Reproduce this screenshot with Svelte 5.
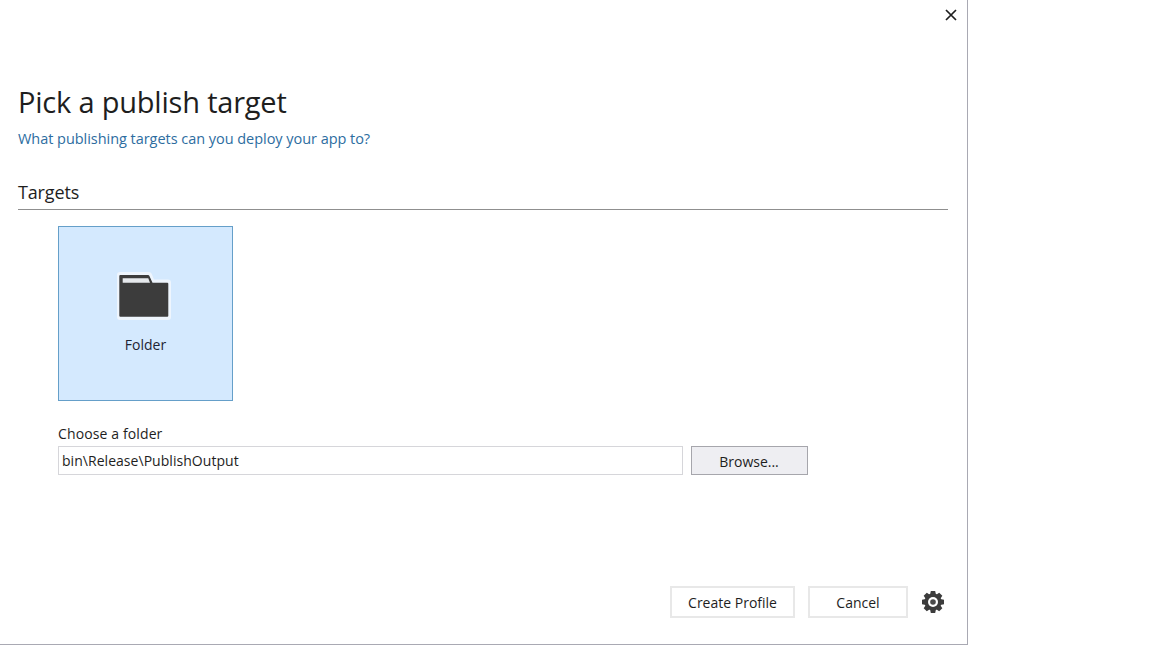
<script>
  let folder = 'bin\\Release\\PublishOutput';
  const teeth = [0, 45, 90, 135, 180, 225, 270, 315];
</script>

<div class="dialog">
  <div class="close-row">
    <button class="close" aria-label="Close">
      <svg viewBox="0 0 12 12" width="12" height="12">
        <path d="M1 1l10 10M11 1L1 11" stroke="#1e1e1e" stroke-width="1.7" fill="none" />
      </svg>
    </button>
  </div>

  <h1>Pick a publish target</h1>
  <p class="subtitle">What publishing targets can you deploy your app to?</p>

  <h2>Targets</h2>

  <div class="content">
    <div class="tile">
      <svg class="folder" viewBox="0 0 54 48" width="54" height="48">
        <path
          d="M3 0h29a3 3 0 0 1 2.700 1.700L37 7.500h14a3 3 0 0 1 3 3V45a3 3 0 0 1-3 3H3a3 3 0 0 1-3-3V3a3 3 0 0 1 3-3z"
          fill="#eef5fd"
        />
        <path
          d="M3.300 3h27.700a1.500 1.500 0 0 1 1.300.8l3.200 6.900h14.800a1 1 0 0 1 1 1v32a1 1 0 0 1-1 1H3.300a1 1 0 0 1-1-1V4a1 1 0 0 1 1-1z"
          fill="#3c3c3c"
        />
        <path d="M5.700 6.300h25.600l1.700 4.400H5.700z" fill="#e6e9ec" />
      </svg>
      <span class="tile-label">Folder</span>
    </div>

    <label class="field-label" for="folder">Choose a folder</label>
    <div class="field-row">
      <input id="folder" class="path" value={folder} />
      <button class="browse">Browse...</button>
    </div>
  </div>

  <div class="footer">
    <button class="action create">Create Profile</button>
    <button class="action cancel">Cancel</button>
    <svg class="gear" viewBox="0 0 24 24" width="24" height="24">
      <circle cx="12" cy="12" r="8.500" fill="#3c3c3c" />
      {#each teeth as angle}
        <path d="M9.800 1h4.400l1 5h-6.400z" fill="#3c3c3c" transform="rotate({angle} 12 12)" />
      {/each}
      <circle cx="12" cy="12" r="5" fill="#fff" />
      <circle cx="12" cy="12" r="2.800" fill="#4a4a4a" />
    </svg>
  </div>
</div>

<style>
  :global(body) {
    margin: 0;
    background: #fff;
  }

  .dialog {
    box-sizing: border-box;
    width: 968px;
    height: 645px;
    display: flex;
    flex-direction: column;
    padding: 0 19px 0 18px;
    border-right: 1px solid #a9a9b3;
    border-bottom: 1px solid #a9a9b3;
    background: #fff;
    font-family: "Open Sans", "Noto Sans", sans-serif;
    color: #1e1e1e;
  }

  .close-row {
    display: flex;
    justify-content: flex-end;
    height: 84px;
    padding-top: 9px;
    box-sizing: border-box;
  }

  .close {
    width: 12px;
    height: 12px;
    margin-right: -9px;
    padding: 0;
    border: none;
    background: none;
    line-height: 0;
  }

  h1 {
    margin: 0;
    height: 36px;
    font-size: 29px;
    line-height: 36px;
    font-weight: 400;
    letter-spacing: -0.2px;
    color: #1e1e1e;
  }

  .subtitle {
    margin: 9px 0 0;
    height: 20px;
    font-size: 14.500px;
    line-height: 20px;
    color: #2d6d9f;
    letter-spacing: -0.04px;
  }

  h2 {
    margin: 31px 0 0;
    height: 29px;
    font-size: 18px;
    line-height: 24px;
    font-weight: 400;
    letter-spacing: -0.15px;
    border-bottom: 1px solid #8f8f8f;
  }

  .content {
    padding: 16px 0 0 40px;
  }

  .tile {
    box-sizing: border-box;
    width: 175px;
    height: 175px;
    display: flex;
    flex-direction: column;
    align-items: center;
    padding-top: 45px;
    background: #d4e9fe;
    border: 1px solid #659fc9;
  }

  .folder {
    display: block;
    margin-right: 3px;
  }

  .tile-label {
    margin-top: 15px;
    font-size: 14px;
    line-height: 20px;
    color: #1e2433;
  }

  .field-label {
    display: block;
    margin-top: 23px;
    font-size: 14px;
    line-height: 20px;
    letter-spacing: 0.12px;
  }

  .field-row {
    display: flex;
    gap: 8px;
    margin-top: 2px;
  }

  .path {
    box-sizing: border-box;
    width: 625px;
    height: 29px;
    padding: 0 3px;
    border: 1px solid #d6d6da;
    font: inherit;
    font-size: 14px;
    letter-spacing: 0.04px;
    color: #1e1e1e;
    outline: none;
  }

  .browse {
    box-sizing: border-box;
    width: 117px;
    height: 29px;
    padding: 1px 1px 0 0;
    background: #eeeef2;
    border: 1px solid #a6a6ac;
    font: inherit;
    font-size: 14px;
    color: #1e1e1e;
  }

  .footer {
    display: flex;
    align-items: center;
    justify-content: flex-end;
    margin-top: auto;
    margin-bottom: 26px;
  }

  .action {
    box-sizing: border-box;
    height: 32px;
    padding: 0;
    background: #fff;
    border: 2px solid #e8e8e8;
    font: inherit;
    font-size: 14px;
    color: #1e1e1e;
  }

  .create {
    width: 125px;
  }

  .cancel {
    width: 100px;
    margin-left: 13px;
  }

  .gear {
    margin-left: 13px;
    margin-right: 3px;
  }
</style>
